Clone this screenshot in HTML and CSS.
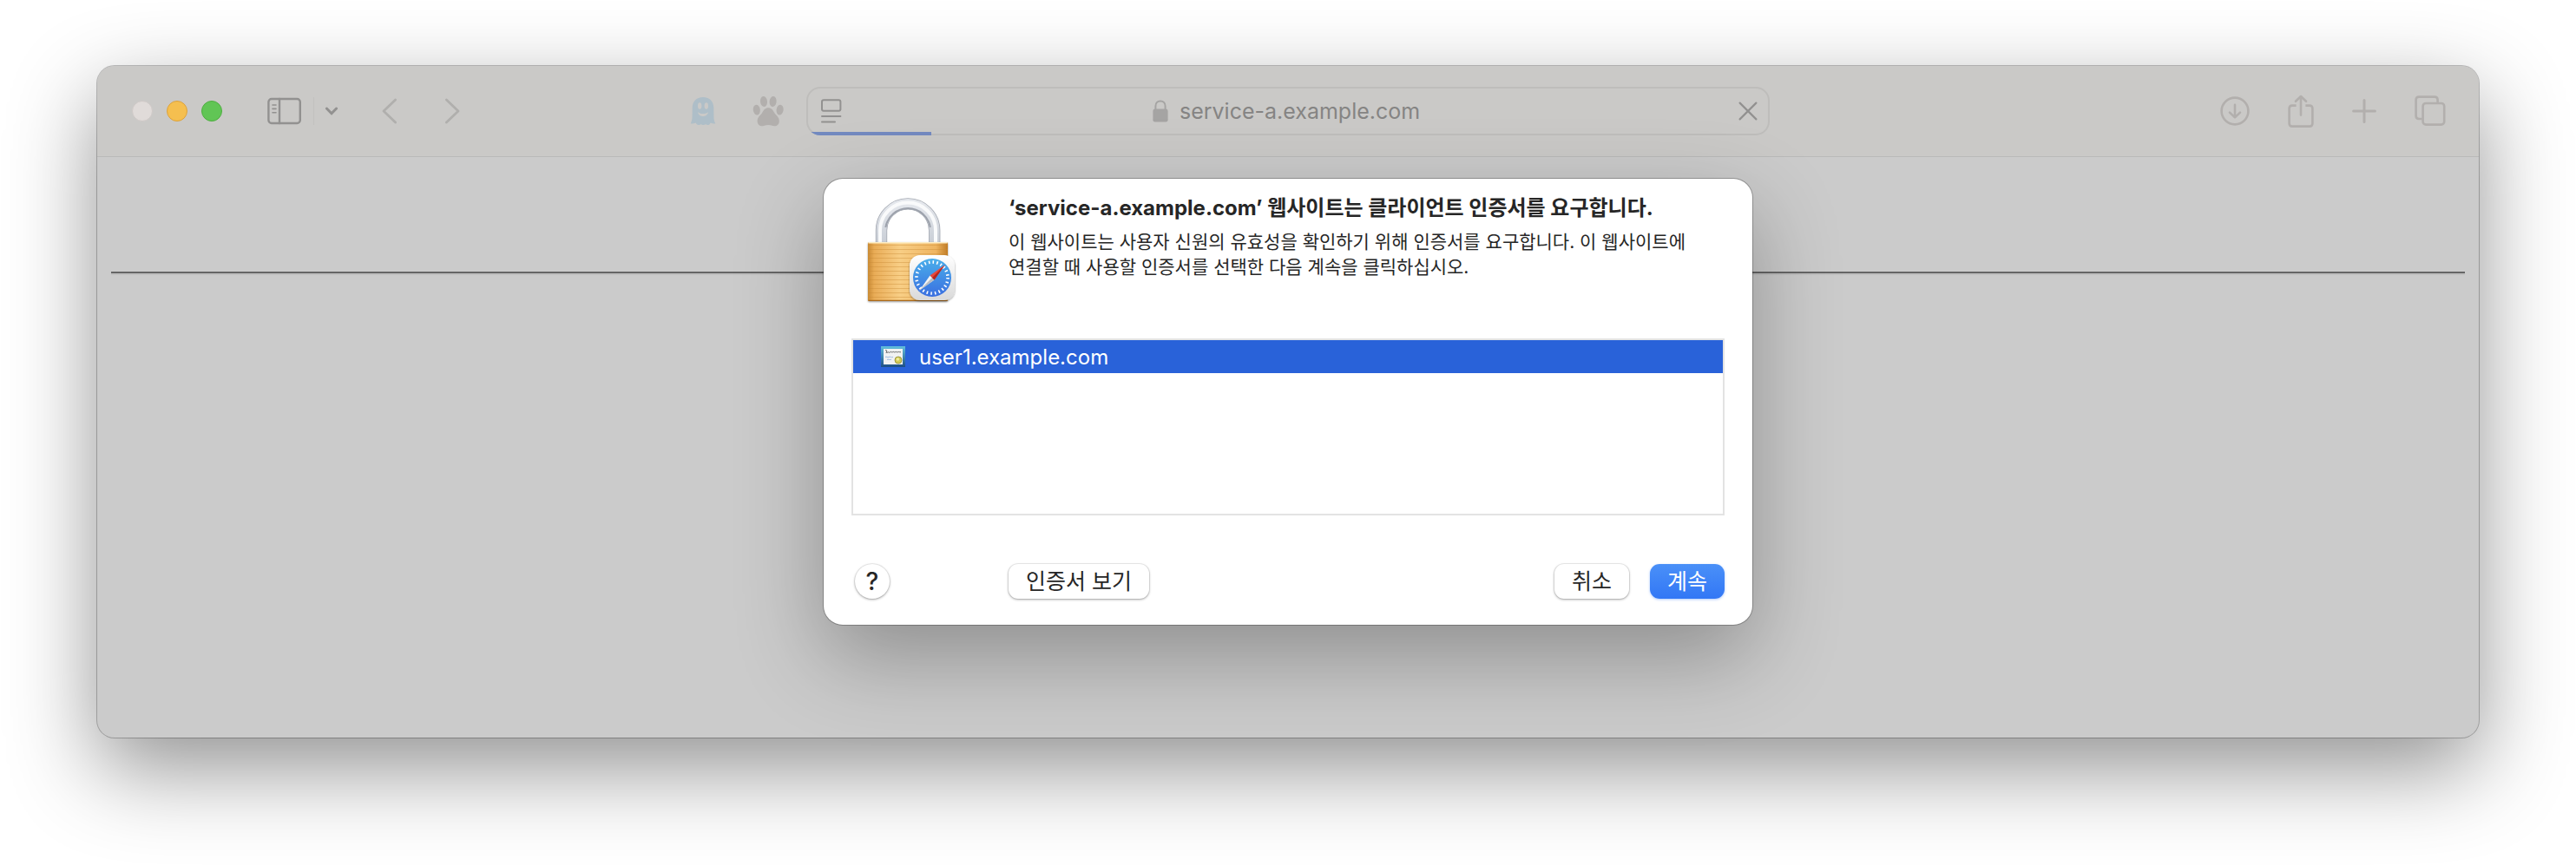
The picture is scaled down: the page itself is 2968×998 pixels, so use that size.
FILE: index.html
```html
<!DOCTYPE html>
<html lang="ko">

<head>
  <meta charset="UTF-8">
  <meta name="viewport" content="width=device-width, initial-scale=1.0">
  <title>service-a.example.com</title>
  <link rel="stylesheet" href="styles.css">
</head>

<body>
  <div class="window">
    <!-- toolbar -->
    <header class="toolbar">
      <div class="tools tools-left">
        <div class="lights">
          <button class="light" aria-label="닫기"></button>
          <button class="light light-min" aria-label="최소화"></button>
          <button class="light light-max" aria-label="확대"></button>
        </div>
        <button class="tool sidebar" aria-label="사이드바">
          <svg width="40" height="32" viewBox="0 0 40 32" fill="none" stroke="#929190" stroke-width="2.4" stroke-linecap="round">
            <rect x="1.4" y="2" width="36.4" height="28" rx="3.5"></rect>
            <path d="M14 2v28"></path>
            <path d="M6 9h4M6 13.4h4M6 17.8h4" stroke-width="1.6"></path>
          </svg>
        </button>
        <button class="tool groups" aria-label="탭 그룹">
          <svg width="16" height="12" viewBox="0 0 16 12" fill="none" stroke="#929190" stroke-width="3" stroke-linecap="round" stroke-linejoin="round">
            <path d="M2.4 3l5.6 5.8L13.6 3"></path>
          </svg>
        </button>
        <button class="tool back" aria-label="뒤로">
          <svg width="18" height="30" viewBox="0 0 18 30" fill="none" stroke="#b0afad" stroke-width="2.8" stroke-linecap="round" stroke-linejoin="round">
            <path d="M15.6 2L2 15l13.6 13"></path>
          </svg>
        </button>
        <button class="tool forward" aria-label="앞으로">
          <svg width="18" height="30" viewBox="0 0 18 30" fill="none" stroke="#b0afad" stroke-width="2.8" stroke-linecap="round" stroke-linejoin="round">
            <path d="M2.4 2L16 15L2.4 28"></path>
          </svg>
        </button>
        <button class="tool ghost" aria-label="Ghostery">
          <svg width="30" height="34" viewBox="0 0 30 34">
            <path fill="#aebec8" d="M15 1C7 1 2.9 6 2.7 13L2.6 23C2.5 27 1.8 29 .8 31.300c1.8.5 4-.2 5.8-.8c.8 1.4 1.7 2.5 3 2.6c1.4 0 2-.7 3-.8c1.4 0 1.5.8 2.6.8s1.5-.9 2.8-.9s2 .9 3.300.8c1.3-.1 1.8-1.5 2.3-2.5c1.8.6 4 1.3 5.6.8C28 29 27.4 27 27.4 23L27.3 13C27 6 23 1 15 1z"></path>
            <ellipse cx="11.2" cy="11" rx="2.2" ry="3.8" fill="#cac9c7"></ellipse>
            <ellipse cx="18.8" cy="11" rx="2.2" ry="3.8" fill="#cac9c7"></ellipse>
            <path fill="#cac9c7" d="M9 18.2c3.5 2.5 8.5 2.5 12 0c-.8 3.5-3.5 4.8-6 4.8s-5.2-1.3-6-4.8z"></path>
          </svg>
        </button>
        <button class="tool paw" aria-label="Paw">
          <svg width="36" height="36" viewBox="0 0 36 36" fill="#b2afad">
            <ellipse cx="13" cy="7" rx="4" ry="6" transform="rotate(-6 13 7)"></ellipse>
            <ellipse cx="23.6" cy="7" rx="4" ry="6" transform="rotate(6 23.6 7)"></ellipse>
            <ellipse cx="4.8" cy="16.6" rx="4" ry="6" transform="rotate(-8 4.8 16.6)"></ellipse>
            <ellipse cx="31.6" cy="16.6" rx="4" ry="6" transform="rotate(8 31.6 16.6)"></ellipse>
            <path d="M18.2 14.2c3.4 0 5.2 2.3 6.8 5.4c1.6 3.2 5.8 5 5.8 9.8c0 3.6-2.4 5.8-5.6 5.8c-2.6 0-4-1.2-7-1.2s-4.4 1.2-7 1.2c-3.2 0-5.6-2.2-5.6-5.8c0-4.8 4.2-6.6 5.8-9.8c1.6-3.1 3.4-5.4 6.8-5.4z"></path>
          </svg>
        </button>
      </div>

      <div class="address">
        <button class="tool" aria-label="페이지 메뉴">
          <svg width="24" height="28" viewBox="0 0 24 28" fill="none" stroke="#929190" stroke-width="2" stroke-linecap="round">
            <rect x="1" y="1.2" width="21.4" height="12.6" rx="2"></rect>
            <path d="M1 20h21.4M1 26.4h15"></path>
          </svg>
        </button>
        <div class="location">
          <svg width="18" height="26" viewBox="0 0 18 26">
            <path d="M3.4 12V7.2C3.4 3.6 5.8 1.4 9 1.4s5.6 2.2 5.6 5.8V12" fill="none" stroke="#a5a4a3" stroke-width="2"></path>
            <rect x=".4" y="10.6" width="17.2" height="15" rx="2.4" fill="#a5a4a3"></rect>
          </svg>
          <input class="url" type="text" value="service-a.example.com" aria-label="주소">
        </div>
        <button class="tool" aria-label="중단">
          <svg width="22" height="22" viewBox="0 0 22 22" fill="none" stroke="#929190" stroke-width="2.2" stroke-linecap="round">
            <path d="M1.6 1.6l18.8 18.8M20.4 1.6L1.6 20.4"></path>
          </svg>
        </button>
        <div class="progress"></div>
      </div>

      <div class="tools tools-right">
        <button class="tool" aria-label="다운로드">
          <svg width="34" height="34" viewBox="0 0 34 34" fill="none" stroke="#b2afad" stroke-width="2.6" stroke-linecap="round" stroke-linejoin="round">
            <circle cx="17" cy="17" r="15.4"></circle>
            <path d="M17 9.8v14.4M11 18.6l6 5.8l6-5.8"></path>
          </svg>
        </button>
        <button class="tool" aria-label="공유">
          <svg width="30" height="38" viewBox="0 0 30 38" fill="none" stroke="#b2afad" stroke-width="2.6" stroke-linecap="round" stroke-linejoin="round">
            <path d="M9.6 12.6H5c-2.2 0-3.4 1.2-3.4 3.4v17.2c0 2.2 1.2 3.4 3.4 3.4h20c2.2 0 3.4-1.2 3.4-3.4V16c0-2.2-1.2-3.4-3.4-3.4h-4.6" stroke-linecap="butt"></path>
            <path d="M15 23.6V2.2M9 7.8l6-5.8l6 5.8"></path>
          </svg>
        </button>
        <button class="tool" aria-label="새로운 탭">
          <svg width="28" height="28" viewBox="0 0 28 28" fill="none" stroke="#b2afad" stroke-width="3" stroke-linecap="round">
            <path d="M14 1.6v24.8M1.6 14h24.8"></path>
          </svg>
        </button>
        <button class="tool" aria-label="탭 개요">
          <svg width="36" height="36" viewBox="0 0 36 36" fill="none" stroke="#b2afad" stroke-width="2.6">
            <path d="M8.6 27H5c-2.2 0-3.4-1.2-3.4-3.4V5c0-2.2 1.2-3.4 3.4-3.4h18.2c2.2 0 3.4 1.2 3.4 3.4v3.6"></path>
            <rect x="9.6" y="9" width="24.6" height="24.6" rx="3.4"></rect>
          </svg>
        </button>
      </div>
    </header>

    <main class="page">
      <hr>
    </main>

    <!-- certificate sheet -->
    <dialog class="sheet" open aria-labelledby="sheet-title">
      <div class="intro">
        <svg class="lock" width="108" height="126" viewBox="-4 -2 108 126">
          <defs>
            <linearGradient id="brass" x1="0" x2="1" y1="0" y2="0">
              <stop offset="0" stop-color="#c98a33"></stop>
              <stop offset=".08" stop-color="#e9ac57"></stop>
              <stop offset=".4" stop-color="#f8ce85"></stop>
              <stop offset=".85" stop-color="#efb561"></stop>
              <stop offset="1" stop-color="#c17c25"></stop>
            </linearGradient>
            <linearGradient id="steel" x1="0" x2="0" y1="0" y2="1">
              <stop offset="0" stop-color="#e4e7ec"></stop>
              <stop offset="1" stop-color="#c9ced6"></stop>
            </linearGradient>
            <linearGradient id="tile" x1="0" x2="0" y1="0" y2="1">
              <stop offset="0" stop-color="#ffffff"></stop>
              <stop offset="1" stop-color="#d9d9d9"></stop>
            </linearGradient>
            <linearGradient id="sky" x1="0" x2="0" y1="0" y2="1">
              <stop offset="0" stop-color="#4aaeea"></stop>
              <stop offset="1" stop-color="#3a6fe0"></stop>
            </linearGradient>
            <pattern id="grooves" width="8" height="5" patternUnits="userSpaceOnUse">
              <path d="M0 4.5h8" stroke="#c98a35" stroke-opacity=".4"></path>
            </pattern>
            <filter id="drop" x="-20%" y="-20%" width="140%" height="150%">
              <feDropShadow dx="0" dy="1" stdDeviation="1.2" flood-opacity=".4"></feDropShadow>
            </filter>
          </defs>
          <g fill="none">
            <path d="M15.5 52V37.5a30.6 30.6 0 0 1 61.2 0V52" stroke="#a3a8b1" stroke-width="13.4"></path>
            <path d="M15.5 52V37.5a30.6 30.6 0 0 1 61.2 0V52" stroke="url(#steel)" stroke-width="11.8"></path>
            <path d="M14 52V37.5a32 32 0 0 1 64 0V52" stroke="#f9fafb" stroke-width="4"></path>
            <path d="M20.4 34a26 26 0 0 1 51.4 0" stroke="#9da2ac" stroke-width="2"></path>
          </g>
          <rect x="0" y="51" width="92" height="68" rx="1.5" fill="url(#brass)" filter="url(#drop)"></rect>
          <rect x="0" y="53" width="92" height="63" fill="url(#grooves)"></rect>
          <path d="M.5 51.7h91" stroke="#fdeec6" stroke-width="1.4"></path>
          <path d="M.5 118.4h91" stroke="#a8691c" stroke-width="1.2"></path>
          <rect x="48" y="66" width="52" height="52" rx="12" fill="url(#tile)" filter="url(#drop)"></rect>
          <circle cx="74" cy="92" r="22" fill="url(#sky)"></circle>
          <circle cx="74" cy="92" r="18" fill="none" stroke="#ffffff" stroke-width="3.6" stroke-dasharray="1.57 3.142"></circle>
          <path d="M59.3 106.7L71.5 89.5l5 5z" fill="#f4f4f4"></path>
          <path d="M59.3 106.7L74 92l2.5 2.5z" fill="#b9bdc2"></path>
          <path d="M88.7 77.3L71.5 89.5l5 5z" fill="#e8483d"></path>
          <path d="M88.7 77.3L74 92l2.5 2.5z" fill="#b3261f"></path>
        </svg>
        <div class="message">
          <h1 id="sheet-title">‘service-a.example.com’ 웹사이트는 클라이언트 인증서를 요구합니다.</h1>
          <p>이 웹사이트는 사용자 신원의 유효성을 확인하기 위해 인증서를 요구합니다. 이 웹사이트에<br>연결할 때 사용할 인증서를 선택한 다음 계속을 클릭하십시오.</p>
        </div>
      </div>

      <ul class="certs" role="listbox" aria-label="인증서">
        <li class="cert" role="option" aria-selected="true">
          <svg width="28" height="24" viewBox="0 0 28 24">
            <defs>
              <linearGradient id="frame" x1="0" x2="0" y1="0" y2="1">
                <stop offset="0" stop-color="#62bfdc"></stop>
                <stop offset="1" stop-color="#1d4f86"></stop>
              </linearGradient>
            </defs>
            <rect width="28" height="24" fill="url(#frame)"></rect>
            <rect x="3" y="3" width="22" height="18" fill="#f1f2f3"></rect>
            <path d="M5 5c2-1.5 2 1 1 3M7 7.5c2-2 2 .8 3.5-.6s1.7.8 3-.2s1.5.8 3 0s1.5.7 3 0s2 .5 3.5 0" fill="none" stroke="#555" stroke-width=".9"></path>
            <path d="M5 12.5c1.5-1.2 2.5 1 4 0s3 .8 5 0M7 15.5c1.5-1 2.5.6 5-.2" fill="none" stroke="#9dbbe0"></path>
            <circle cx="20" cy="16" r="4" fill="#d3cb55" stroke="#8f8a35" stroke-width=".8"></circle>
            <circle cx="19.4" cy="15" r="1.8" fill="#f0ec9c"></circle>
          </svg>
          <span>user1.example.com</span>
        </li>
      </ul>

      <div class="actions">
        <button class="btn help" aria-label="도움말">?</button>
        <button class="btn show">인증서 보기</button>
        <button class="btn cancel">취소</button>
        <button class="btn primary">계속</button>
      </div>
    </dialog>
  </div>
</body>

</html>
```
FILE: styles.css
```css
* {
  margin: 0;
  padding: 0;
  box-sizing: border-box;
}

body {
  display: flex;
  min-height: 100vh;
  padding: 76px 112px 148px;
  background: #fff;
  color: #262626;
  font-family: Inter, "Noto Sans CJK KR", sans-serif;
  font-size: 24px;
}

button,
input {
  border: 0;
  background: none;
  color: inherit;
  font: inherit;
}

svg {
  display: block;
  flex: none;
}

/* browser window */
.window {
  position: relative;
  flex: 1;
  min-height: 680px;
  border-radius: 20px;
  background: #cbcbcb;
  box-shadow: 0 0 0 1px rgba(0, 0, 0, 0.24), 0 36px 100px rgba(0, 0, 0, 0.43);
}

.toolbar {
  display: grid;
  grid-template-columns: 1fr minmax(0, 1110px) 1fr;
  align-items: center;
  height: 105px;
  border-bottom: 1px solid #b9b9b9;
  border-radius: 20px 20px 0 0;
  background: #cac9c7;
}

.tools {
  display: flex;
  align-items: center;
}

.tools-left {
  padding: 0 26px 0 40px;
}

.tools-right {
  justify-content: flex-end;
  gap: 44px;
  padding-right: 38px;
}

.lights {
  display: flex;
  gap: 16px;
}

.light {
  width: 24px;
  height: 24px;
  border: 1px solid #cfc9c7;
  border-radius: 50%;
  background: #e0dbd9;
}

.light-min {
  border-color: #dca23c;
  background: #f5bf4f;
}

.light-max {
  border-color: #4fae41;
  background: #61c555;
}

.sidebar {
  margin-left: 52px;
  padding-right: 13px;
  border-right: 1px solid #c2c1bf;
}

.groups {
  margin-left: 12px;
}

.back {
  margin-left: 50px;
}

.forward {
  margin-left: 54px;
}

.ghost {
  margin-left: auto;
}

.paw {
  margin-left: 42px;
}

.address {
  position: relative;
  display: flex;
  align-items: center;
  justify-content: space-between;
  height: 56px;
  padding: 0 14px 0 17px;
  border-radius: 16px;
  box-shadow: inset 0 0 0 2px #bebdbb;
  overflow: hidden;
}

.location {
  display: flex;
  align-items: center;
  gap: 13px;
  color: #858483;
}

.url {
  width: 286px;
  font-size: 25px;
}

.progress {
  position: absolute;
  left: 0;
  bottom: 0;
  width: 13%;
  height: 4px;
  background: #738ac0;
}

/* web page */
.page {
  padding: 132px 16px 0;
}

.page hr {
  border: 0;
  border-top: 2px solid #666;
  border-bottom: 2px solid #bfbfbf;
}

/* certificate sheet */
.sheet {
  position: absolute;
  inset: 130px 0 auto;
  width: 1070px;
  max-width: 100%;
  margin: 0 auto;
  padding: 20px 32px 30px;
  border: 0;
  border-radius: 22px;
  background: #fff;
  color: inherit;
  box-shadow: 0 0 0 1px rgba(0, 0, 0, 0.25), 0 36px 100px rgba(0, 0, 0, 0.3);
}

.intro {
  display: grid;
  grid-template-columns: 181px 1fr;
}

.lock {
  margin-left: 15px;
}

.message h1 {
  font-size: 24px;
  font-weight: 700;
  line-height: 28px;
}

.message p {
  margin-top: 10px;
  font-size: 21px;
  line-height: 29px;
}

.certs {
  height: 204px;
  margin-top: 38px;
  border: 2px solid #e3e3e3;
  list-style: none;
}

.cert {
  display: flex;
  align-items: center;
  gap: 16px;
  height: 38px;
  padding-left: 32px;
  background: #2962d9;
  color: #fff;
}

.actions {
  display: flex;
  margin-top: 56px;
  padding-left: 4px;
}

.btn {
  height: 40px;
  padding: 0 20px;
  border-radius: 11px;
  background: #fff;
  font-size: 25px;
  line-height: 36px;
  box-shadow: 0 0 0 1px rgba(0, 0, 0, 0.06), 0 1px 3px rgba(0, 0, 0, 0.35);
}

.help {
  width: 40px;
  padding: 0;
  border-radius: 50%;
  font-size: 28px;
  font-weight: 500;
  line-height: 40px;
}

.show {
  margin-left: 137px;
}

.cancel {
  margin-left: auto;
}

.primary {
  margin-left: 24px;
  background: linear-gradient(#4a90f8, #3277f5);
  color: #fff;
  box-shadow: 0 1px 3px rgba(50, 119, 245, 0.4);
}
```
